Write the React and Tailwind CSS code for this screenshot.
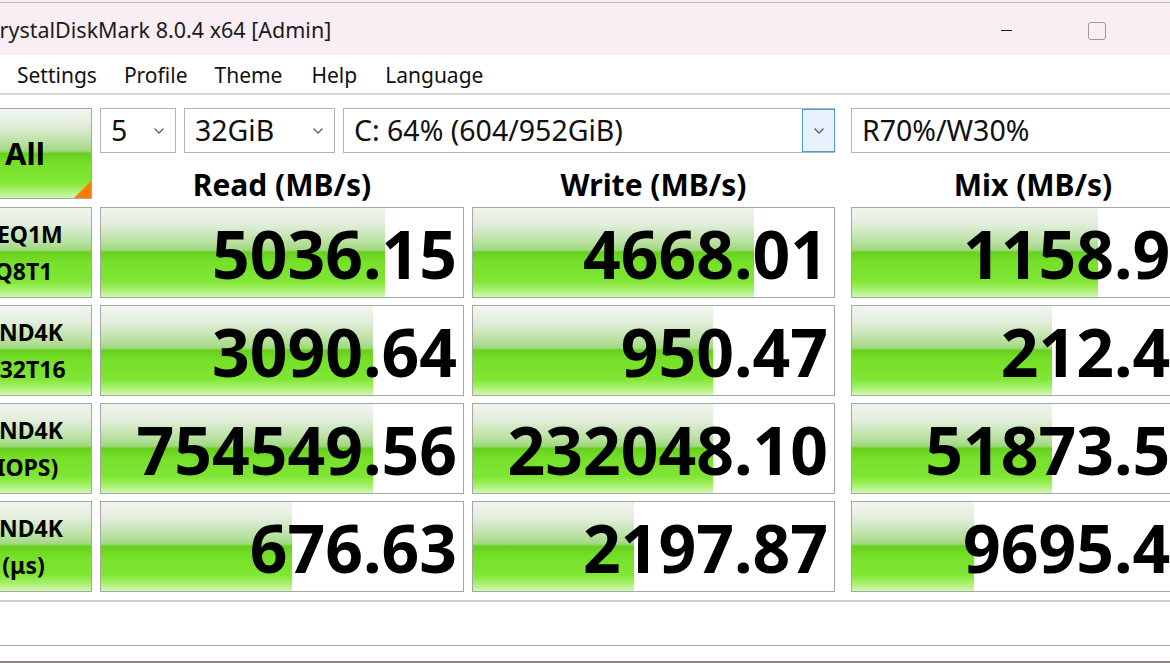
import React from "react";

const GRAD =
  "bg-[linear-gradient(to_bottom,#f1f5ef_0%,#e2eedc_18%,#b9e1a1_38%,#a2d883_47%,#66d11d_50%,#77e02a_62%,#80e735_82%,#a9f070_92%,#d2f8b4_100%)]";

const rows = [
  { l1: "SEQ1M", l2: "Q8T1", r: "5036.15", rp: 284, w: "4668.01", wp: 281, m: "1158.92", mp: 246 },
  { l1: "RND4K", l2: "Q32T16", r: "3090.64", rp: 272, w: "950.47", wp: 240, m: "212.45", mp: 200 },
  { l1: "RND4K", l2: "(IOPS)", r: "754549.56", rp: 272, w: "232048.10", wp: 240, m: "51873.54", mp: 200 },
  { l1: "RND4K", l2: "(μs)", r: "676.63", rp: 191, w: "2197.87", wp: 161, m: "9695.41", mp: 122 },
];

function Chevron() {
  return (
    <svg width="12" height="8" viewBox="0 0 12 8" className="shrink-0">
      <path d="M1.5 1.5 L6 6 L10.5 1.5" fill="none" stroke="#606060" strokeWidth="1.3" />
    </svg>
  );
}

function Combo({ w, text, blue }) {
  return (
    <div
      className={`${w} h-[45px] border border-[#b4b4b4] bg-white flex items-center justify-between shrink-0`}
    >
      <span className="pl-[10px] text-[28.5px] leading-none text-[#111] whitespace-nowrap">{text}</span>
      {blue ? (
        <div className="h-full w-[33px] border border-[#4e9ae0] bg-[#e6f1fb] flex items-center justify-center -mr-px">
          <Chevron />
        </div>
      ) : (
        <div className="pr-[10px] flex items-center">
          <Chevron />
        </div>
      )}
    </div>
  );
}

function Cell({ value, pct, w }) {
  return (
    <div className={`${w} h-[91px] shrink-0 border border-[#a6a6a6] bg-white relative overflow-hidden`}>
      <div className={`absolute left-0 top-0 bottom-0 ${GRAD}`} style={{ width: pct + "px" }} />
      <div className="relative h-full flex items-center justify-end pr-[6px]">
        <span className="text-[66px] font-bold leading-none text-black whitespace-nowrap">
          {value}
        </span>
      </div>
    </div>
  );
}

export default function App() {
  return (
    <div
      className="w-[1170px] h-[663px] overflow-hidden bg-white flex flex-col"
      style={{ fontFamily: '"Noto Sans", "Open Sans", sans-serif' }}
    >
      {/* strip of window behind */}
      <div className="h-[3px] bg-[#f2f2f2] border-b border-[#bdbdbd] shrink-0" />

      {/* title bar */}
      <div className="h-[52px] bg-[#f8eef3] flex items-center shrink-0 relative pt-[3px]">
        <span className="ml-[-14px] text-[21.5px] text-[#1b1b1b] whitespace-nowrap">
          CrystalDiskMark 8.0.4 x64 [Admin]
        </span>
        <div className="ml-auto flex items-center">
          <div className="w-[11px] h-px bg-[#111] mr-[76px]" />
          <div className="w-[18px] h-[18px] border border-[#9a9a9a] rounded-[3px] mr-[64px]" />
        </div>
      </div>

      {/* menu bar */}
      <div className="h-[38px] flex items-center shrink-0 text-[21px] text-[#111] pt-[4px]">
        <span className="ml-[17px]">Settings</span>
        <span className="ml-[27px]">Profile</span>
        <span className="ml-[27px]">Theme</span>
        <span className="ml-[29px]">Help</span>
        <span className="ml-[28px]">Language</span>
      </div>
      <div className="h-[2px] bg-[#d9d9d9] shrink-0" />

      {/* content */}
      <div className="ml-[-42px] mt-[13px] flex flex-col gap-[7px] shrink-0">
        <div className="flex gap-[8px] mb-[1px]">
          <div
            className={`w-[134px] h-[91px] shrink-0 border border-[#a6a6a6] ${GRAD} relative flex items-center justify-center`}
          >
            <span className="text-[31px] font-bold text-black leading-none">All</span>
            <svg className="absolute right-0 bottom-0" width="17" height="17" viewBox="0 0 17 17">
              <polygon points="17,0 17,17 0,17" fill="#ff7a07" />
            </svg>
          </div>
          <div className="flex flex-col">
            <div className="flex h-[45px]">
              <Combo w="w-[76px]" text="5" />
              <div className="w-[8px]" />
              <Combo w="w-[151px]" text="32GiB" />
              <div className="w-[8px]" />
              <Combo w="w-[492px]" text="C: 64% (604/952GiB)" blue />
              <div className="w-[16px]" />
              <Combo w="w-[364px]" text="R70%/W30%" />
            </div>
            <div className="flex h-[46px] items-center pt-[18px] text-[30px] font-bold text-black leading-none">
              <div className="w-[364px] text-center">Read (MB/s)</div>
              <div className="w-[8px]" />
              <div className="w-[363px] text-center">Write (MB/s)</div>
              <div className="w-[16px]" />
              <div className="w-[364px] text-center">Mix (MB/s)</div>
            </div>
          </div>
        </div>

        {rows.map((r, i) => (
          <div key={i} className="flex">
            <div
              className={`w-[134px] h-[91px] shrink-0 border border-[#a6a6a6] ${GRAD} flex flex-col items-center justify-center text-[23px] font-bold text-black leading-[37px] pr-[3px]`}
            >
              <span className="whitespace-nowrap">{r.l1}</span>
              <span className="whitespace-nowrap">{r.l2}</span>
            </div>
            <div className="w-[8px] shrink-0" />
            <Cell w="w-[364px]" value={r.r} pct={r.rp} />
            <div className="w-[8px] shrink-0" />
            <Cell w="w-[363px]" value={r.w} pct={r.wp} />
            <div className="w-[16px] shrink-0" />
            <Cell w="w-[364px]" value={r.m} pct={r.mp} />
          </div>
        ))}
      </div>

      {/* comment box */}
      <div className="mt-[8px] h-[46px] border-t-2 border-[#cfcfcf] border-b border-b-[#a3a3a3] shrink-0" />
      <div className="flex-1" />
      <div className="h-[2px] bg-[#8d8882] shrink-0" />
    </div>
  );
}
